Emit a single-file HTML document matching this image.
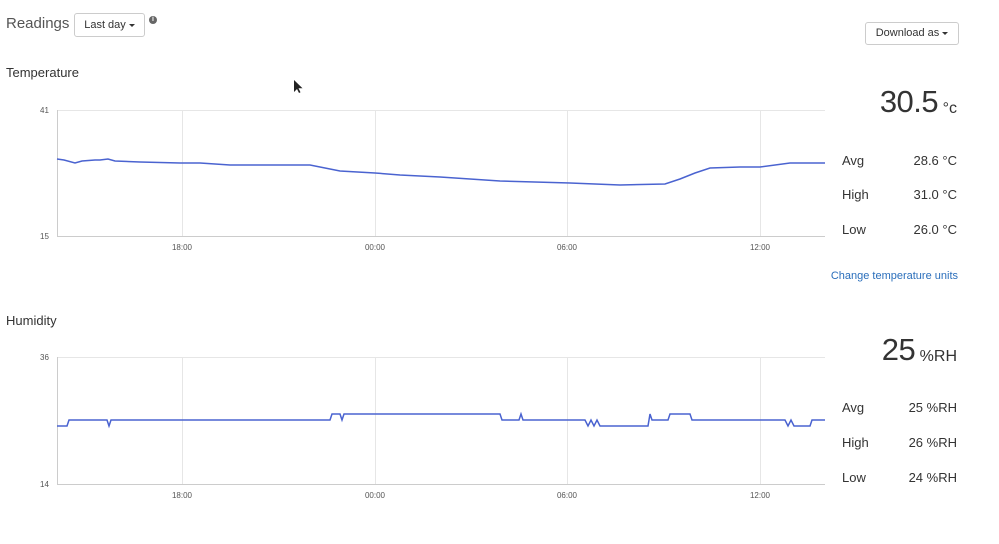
<!DOCTYPE html>
<html><head><style>
body{margin:0;width:999px;height:544px;background:#fff;font-family:"Liberation Sans",sans-serif;color:#333;position:relative;overflow:hidden}
.a{position:absolute;white-space:nowrap}
.btn{position:absolute;border:1px solid #ccc;border-radius:3px;background:#fff;font-size:11px;color:#333;box-sizing:border-box;text-align:center}
.caret{display:inline-block;width:0;height:0;border-left:3px solid transparent;border-right:3px solid transparent;border-top:3px solid #333;vertical-align:middle;margin-left:3px}
.lbl{font-size:13px;color:#333}
.big{font-size:31px;color:#333;letter-spacing:-0.5px}
.big span{font-size:16px;position:relative;top:1px;letter-spacing:0}
</style></head><body>
<div class="a" style="left:6px;top:15px;font-size:15px;color:#555">Readings</div>
<div class="btn" style="left:74px;top:13px;width:71px;height:24px;line-height:22px">Last day<span class="caret"></span></div>
<div class="a" style="left:149px;top:16px;width:8px;height:8px;border-radius:50%;background:#666;color:#fff;font-size:7px;line-height:8px;text-align:center;font-weight:bold">i</div>
<div class="btn" style="left:865px;top:22px;width:94px;height:23px;line-height:21px">Download as<span class="caret"></span></div>
<div class="a lbl" style="left:6px;top:65px">Temperature</div>
<div class="a lbl" style="left:6px;top:313px">Humidity</div>
<svg class="a" style="left:0;top:0" width="999" height="544">
<g stroke="#e6e6e6" stroke-width="1">
<line x1="57" y1="110.5" x2="825" y2="110.5"/><line x1="182.5" y1="110" x2="182.5" y2="236"/><line x1="375.5" y1="110" x2="375.5" y2="236"/><line x1="567.5" y1="110" x2="567.5" y2="236"/><line x1="760.5" y1="110" x2="760.5" y2="236"/>
<line x1="57" y1="357.5" x2="825" y2="357.5"/><line x1="182.5" y1="357" x2="182.5" y2="484"/><line x1="375.5" y1="357" x2="375.5" y2="484"/><line x1="567.5" y1="357" x2="567.5" y2="484"/><line x1="760.5" y1="357" x2="760.5" y2="484"/>
</g>
<g stroke="#ccc" fill="none"><path d="M57.5 110V236.5H825"/><path d="M57.5 357V484.5H825"/></g>
<polyline fill="none" stroke="#4a63d0" stroke-width="1.5" points="57,159 64,160 75,163 82,161 95,160 100,160 108,159 115,161 140,162 180,163 200,163 230,165 270,165 310,165 325,168 340,171 375,173 400,175 440,177 500,181 570,183 620,185 665,184 680,179 695,173 710,168 740,167 760,167 790,163 825,163"/>
<polyline fill="none" stroke="#4a63d0" stroke-width="1.5" points="57,426 67,426 69,420 107,420 109,426 111,420 330,420 332,414 340,414 342,420 344,414 500,414 502,420 519,420 521,414 523,420 585,420 588,426 591,420 594,426 597,420 600,426 604,426 648,426 650,414 652,420 668,420 670,414 690,414 692,420 785,420 788,426 791,420 794,426 810,426 812,420 825,420"/>
<text x="40" y="113" font-size="8" fill="#555">41</text>
<text x="40" y="239" font-size="8" fill="#555">15</text>
<text x="40" y="360" font-size="8" fill="#555">36</text>
<text x="40" y="487" font-size="8" fill="#555">14</text>
<g font-size="8" fill="#555" text-anchor="middle">
<text x="182" y="250">18:00</text><text x="375" y="250">00:00</text><text x="567" y="250">06:00</text><text x="760" y="250">12:00</text>
<text x="182" y="498">18:00</text><text x="375" y="498">00:00</text><text x="567" y="498">06:00</text><text x="760" y="498">12:00</text>
</g>
<path d="M294 80v12l3-3 2 4 1.5-.7-2-4h4z" fill="#222"/>
</svg>
<div class="a big" style="right:42px;top:84px">30.5<span> °c</span></div>
<div class="a lbl" style="left:842px;top:153px">Avg</div><div class="a lbl" style="right:42px;top:153px">28.6 °C</div>
<div class="a lbl" style="left:842px;top:187px">High</div><div class="a lbl" style="right:42px;top:187px">31.0 °C</div>
<div class="a lbl" style="left:842px;top:222px">Low</div><div class="a lbl" style="right:42px;top:222px">26.0 °C</div>
<div class="a" style="right:41px;top:270px;font-size:11px;color:#2a6ebb">Change temperature units</div>
<div class="a big" style="right:42px;top:332px">25<span> %RH</span></div>
<div class="a lbl" style="left:842px;top:400px">Avg</div><div class="a lbl" style="right:42px;top:400px">25 %RH</div>
<div class="a lbl" style="left:842px;top:435px">High</div><div class="a lbl" style="right:42px;top:435px">26 %RH</div>
<div class="a lbl" style="left:842px;top:470px">Low</div><div class="a lbl" style="right:42px;top:470px">24 %RH</div>
</body></html>
